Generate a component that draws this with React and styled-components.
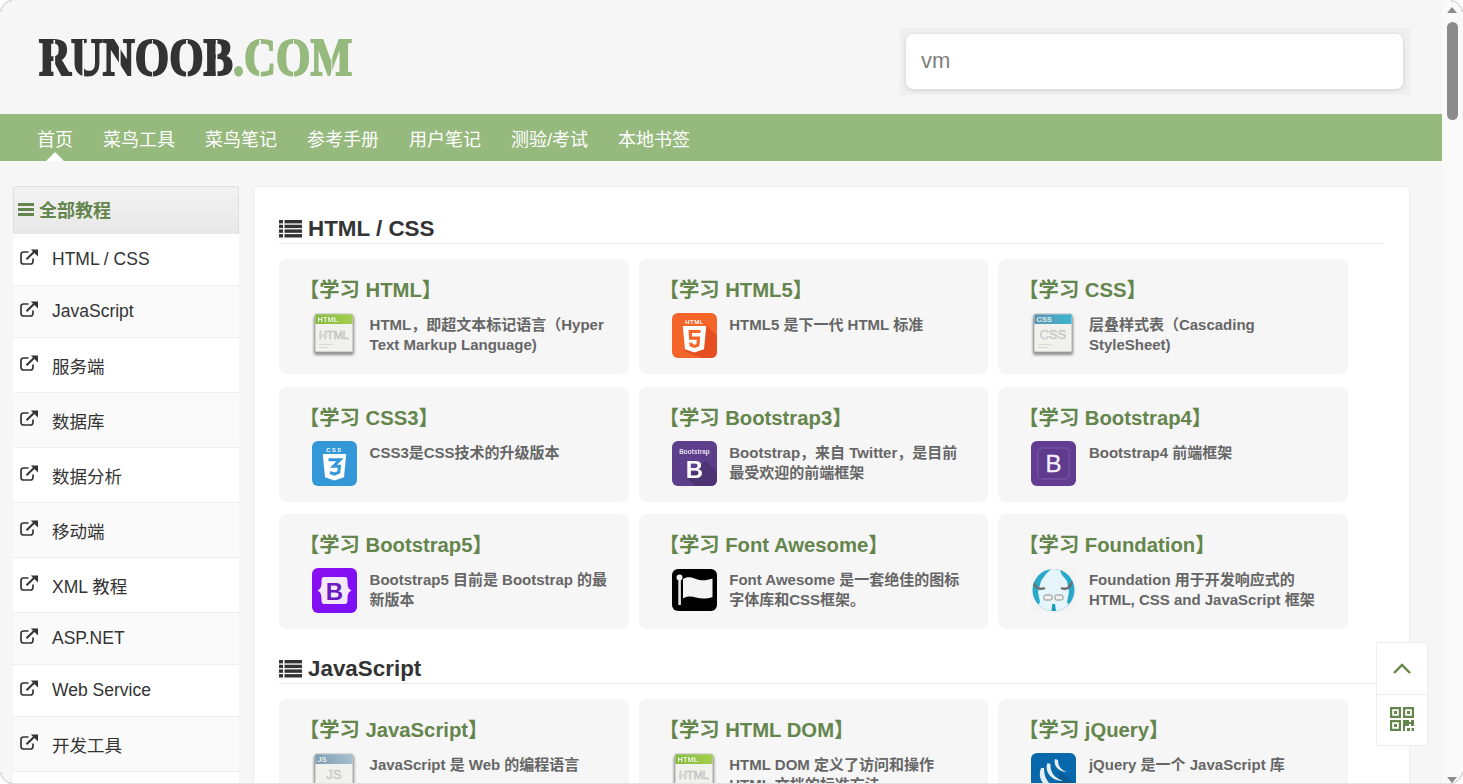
import React from "react";
import styled, { createGlobalStyle } from "styled-components";

const GREEN = "#96b97d";
const DARKGREEN = "#64854c";
const SANS = `"Liberation Sans", "Noto Sans CJK SC", sans-serif`;

const Global = createGlobalStyle`
  html, body { margin: 0; padding: 0; height: 100%; overflow: hidden; background: #f6f6f6; }
  * { box-sizing: border-box; }
  body { font-family: ${SANS}; }
`;

const Shell = styled.div`
  display: flex;
  width: 100%;
  height: 100vh;
  overflow: hidden;
  background: #f6f6f6;
`;
const Page = styled.div`
  flex: 1;
  min-width: 0;
  overflow: hidden;
`;
const Header = styled.header`
  height: 114px;
  display: flex;
  align-items: flex-start;
  justify-content: space-between;
  padding: 28px 32px 0 39px;
`;
const Logo = styled.div`
  margin-top: 6px;
  height: 48px;
  width: 314px;
  font-family: "Liberation Serif", serif;
  font-weight: 700;
  font-size: 52px;
  line-height: 48px;
  white-space: nowrap;
  transform: scaleX(0.85);
  transform-origin: left center;
  -webkit-text-stroke: 2px currentColor;
`;
const LogoPart = styled.span`
  color: ${(p) => p.$color};
`;
const LogoLetter = styled.span`
  position: relative;
  display: inline-block;
  &::after {
    content: "";
    position: absolute;
    left: ${(p) => p.$at}%;
    top: 6px;
    bottom: 5px;
    width: 1.6px;
    background: #f6f6f6;
  }
`;
const SearchWrap = styled.div`
  width: 510px;
  height: 67px;
  padding: 6px 7px 6px 6px;
  background: #efefef;
  border-radius: 2px;
`;
const SearchInput = styled.input`
  display: block;
  width: 100%;
  height: 55px;
  border: 0;
  outline: 0;
  border-radius: 7px;
  padding: 0 15px 2px;
  background: #fff;
  color: #808080;
  font: 22px ${SANS};
  box-shadow: 0 1px 4px rgba(0, 0, 0, 0.14);
`;
const Nav = styled.nav`
  height: 47px;
  background: ${GREEN};
  display: flex;
  align-items: flex-start;
  gap: 30px;
  padding-left: 37px;
`;
const NavItem = styled.a`
  position: relative;
  color: #fff;
  font-size: 18px;
  line-height: 53px;
  height: 47px;
  ${(p) =>
    p.$active &&
    `&::after {
      content: "";
      position: absolute;
      left: 50%;
      bottom: 0;
      margin-left: -9px;
      border-left: 9px solid transparent;
      border-right: 9px solid transparent;
      border-bottom: 9px solid #fff;
    }`}
`;
const Content = styled.div`
  display: flex;
  align-items: flex-start;
  gap: 14px;
  padding: 25px 32px 0 13px;
`;
const Sidebar = styled.aside`
  width: 226px;
  flex: none;
  background: #fff;
`;
const SideHead = styled.div`
  height: 48px;
  display: flex;
  align-items: center;
  gap: 5px;
  padding: 0 0 3px 4px;
  border: 1px solid #dedede;
  border-bottom: 0;
  border-radius: 3px 3px 0 0;
  background: linear-gradient(#f2f2f2, #e8e8e8);
  color: ${DARKGREEN};
  font-size: 18px;
  font-weight: 700;
`;
const SideRow = styled.a`
  display: flex;
  align-items: center;
  height: ${(p) => (p.$tall ? 55 : 52)}px;
  padding-left: 7px;
  border-bottom: 1px solid #eee;
  background: ${(p) => (p.$alt ? "#fafafa" : "#fff")};
  color: #333;
  font-size: 17.5px;
`;
const SideIcon = styled.svg`
  flex: none;
  width: 18px;
  height: 16px;
  margin-right: 14px;
  margin-top: -5px;
`;
const Main = styled.main`
  flex: 1;
  min-width: 0;
  background: #fff;
  border: 1px solid #eee;
  border-radius: 5px;
  padding: 28px 25px 0 25px;
`;
const Section = styled.section`
  margin-bottom: 26px;
`;
const SectionTitle = styled.h2`
  display: flex;
  align-items: center;
  gap: 6px;
  margin: 0 0 15px;
  height: 29px;
  padding-bottom: 1px;
  border-bottom: 1px solid #e8e8e8;
  color: #333;
  font-size: 22.4px;
  line-height: 28px;
  font-weight: 700;
`;
const CardGrid = styled.div`
  display: grid;
  grid-template-columns: repeat(3, 349.67px);
  column-gap: 10px;
  row-gap: 12.5px;
`;
const Card = styled.a`
  display: block;
  height: 115px;
  background: #f6f6f6;
  border-radius: 8px;
  padding: 18px 20px 0 20px;
`;
const CardTitle = styled.h4`
  margin: 0 0 10px;
  height: 26px;
  color: ${DARKGREEN};
  font-size: 20.3px;
  line-height: 26px;
  font-weight: 700;
  white-space: nowrap;
`;
const CardBody = styled.div`
  display: flex;
  gap: 12.6px;
  padding-left: 13px;
`;
const CardIcon = styled.svg`
  flex: none;
  width: 45px;
  height: 45px;
  ${(p) => p.$soft && "filter: blur(0.45px);"}
`;
const CardText = styled.p`
  margin: 2px 0 0;
  color: #666;
  font-size: 15px;
  line-height: 20px;
  font-weight: 700;
`;
const FloatBox = styled.div`
  position: fixed;
  left: 1376px;
  top: 642px;
  width: 52px;
  background: #fff;
  border: 1px solid #eee;
`;
const FloatCell = styled.div`
  height: 51px;
  display: flex;
  align-items: center;
  justify-content: center;
  & + & { border-top: 1px solid #eee; padding-bottom: 3px; }
`;
const ScrollTrack = styled.div`
  position: relative;
  flex: none;
  width: 21px;
  height: 100%;
  background: #f9f9f9;
`;
const ScrollThumb = styled.div`
  position: absolute;
  left: 5px;
  top: 22px;
  width: 11px;
  height: 98px;
  border-radius: 6px;
  background: #8b8b8b;
`;
const ScrollArrow = styled.div`
  position: absolute;
  left: 5px;
  ${(p) => (p.$down ? "bottom: 1px;" : "top: 7px;")}
  border-left: 5.5px solid transparent;
  border-right: 5.5px solid transparent;
  ${(p) => (p.$down ? "border-top: 6px solid #8b8b8b;" : "border-bottom: 6px solid #8b8b8b;")}
`;
const Corner = styled.div`
  position: fixed;
  width: 12px;
  height: 12px;
  overflow: hidden;
  ${(p) => p.$v}: 0;
  ${(p) => p.$h}: 0;
  &::before {
    content: "";
    position: absolute;
    width: 24px;
    height: 24px;
    ${(p) => p.$v}: 0;
    ${(p) => p.$h}: 0;
    border-radius: 50%;
    border: 1px solid #c4c4c4;
    box-shadow: 0 0 0 12px #fff;
  }
`;
const BottomEdge = styled.div`
  position: fixed;
  left: 0;
  right: 0;
  bottom: 0;
  height: 1px;
  background: #e4e4e4;
`;

const BarsIcon = () => (
  <svg width="16" height="13" viewBox="0 0 16 13" fill={DARKGREEN}>
    <rect y="0" width="16" height="3" />
    <rect y="5" width="16" height="3" />
    <rect y="10" width="16" height="3" />
  </svg>
);
const ListIcon = () => (
  <svg width="23" height="18" viewBox="0 0 23 18" fill="#333">
    {[0, 4.7, 9.4, 14.1].map((y) => (
      <g key={y}>
        <rect x="0" y={y} width="4" height="3.4" />
        <rect x="5.5" y={y} width="17.5" height="3.4" />
      </g>
    ))}
  </svg>
);
const ExtIcon = () => (
  <SideIcon viewBox="0 0 18 16">
    <path
      d="M8.5 3H3.4A2.4 2.4 0 0 0 1 5.4v7.2A2.4 2.4 0 0 0 3.4 15h7.2a2.4 2.4 0 0 0 2.4-2.4V9.5"
      fill="none"
      stroke="#333"
      strokeWidth="1.7"
    />
    <path d="M6.5 10.2L14 3" fill="none" stroke="#333" strokeWidth="2" />
    <path d="M10.8 0.4H18V7.6Z" fill="#333" />
  </SideIcon>
);

const WindowIcon = ({ bar, bar2, label, id }) => (
  <CardIcon viewBox="0 0 45 45" $soft>
    <defs>
      <filter id={`b${id}`} x="-20%" y="-20%" width="140%" height="140%">
        <feGaussianBlur stdDeviation="1.7" />
      </filter>
      <linearGradient id={`g${id}`} x1="0" y1="0" x2="1" y2="0">
        <stop offset="0" stopColor={bar} />
        <stop offset="1" stopColor={bar2} />
      </linearGradient>
    </defs>
    <rect x="2" y="3" width="40" height="39" rx="2" fill="#8a8a8a" filter={`url(#b${id})`} />
    <rect x="3" y="1" width="38" height="38" rx="1.5" fill="#f1f1ee" stroke="#a5a5a5" strokeWidth="0.8" />
    <rect x="3.4" y="1.4" width="37.2" height="9.6" fill={`url(#g${id})`} />
    <text x="5.5" y="8.6" fontFamily="Liberation Sans" fontSize="7.5" fontWeight="700" fill="#e8f0e0">{label}</text>
    <text x="22" y="26" textAnchor="middle" fontFamily="Liberation Sans" fontSize={label.length > 3 ? 11 : 13} fill="#f4f4f4" stroke="#b8b8b8" strokeWidth="0.6">{label}</text>
    <rect x="7" y="31" width="14" height="1" fill="#d8d8d8" />
    <rect x="7" y="34" width="9" height="1" fill="#d8d8d8" />
  </CardIcon>
);
const ShieldIcon = ({ bg, dark, text, id, digit }) => (
  <CardIcon viewBox="0 0 45 45" $soft>
    <defs>
      <clipPath id={`c${id}`}><rect width="45" height="45" rx="6" /></clipPath>
    </defs>
    <g clipPath={`url(#c${id})`}>
      <rect width="45" height="45" fill={bg} />
      {dark && <path d="M34 12L45 23V45H30L12 38Z" fill={dark} />}
      <text x="22.5" y="10.5" textAnchor="middle" fontFamily="Liberation Sans" fontSize="6" fontWeight="700" letterSpacing={digit === 3 ? 1.4 : 0.4} fill="#fff">{text}</text>
      <path d="M10.8 13H34.2L32 36.2L22.5 39.6L13 36.2Z" fill="#fff" />
      {digit === 5 ? (
        <path d="M16.5 17H28.5V20H19.8L20.1 23.5H28.2L27.4 33.3L22.5 35L17.6 33.3L17.3 29.5H20.4L20.6 31L22.5 31.7L24.4 31L24.7 26.7H17.1Z" fill={bg} />
      ) : (
        <path d="M16.5 18.7H28L21.5 25.2H27.4L26.8 31.3L22.5 33.2L18 31.5" fill="none" stroke={bg} strokeWidth="3" />
      )}
    </g>
  </CardIcon>
);
const Bs3Icon = () => (
  <CardIcon viewBox="0 0 45 45" $soft>
    <rect width="45" height="45" rx="6" fill="#5d3e8a" />
    <path d="M34 20L45 31V39A6 6 0 0 1 39 45H23L14 36Z" fill="#4d3374" />
    <text x="22.5" y="13" textAnchor="middle" fontFamily="Liberation Sans" fontSize="6.5" fontWeight="700" fill="#e6dff0">Bootstrap</text>
    <text x="22.5" y="37" textAnchor="middle" fontFamily="Liberation Sans" fontSize="24" fontWeight="700" fill="#fff">B</text>
  </CardIcon>
);
const Bs4Icon = () => (
  <CardIcon viewBox="0 0 45 45">
    <rect width="45" height="45" rx="6" fill="#623d92" />
    <rect x="7" y="7" width="31" height="31" rx="4" fill="#5f3b8e" stroke="#7350a2" strokeWidth="1.4" />
    <text x="22.5" y="31" textAnchor="middle" fontFamily="Liberation Sans" fontSize="24" fill="#f4effa" stroke="#f4effa" strokeWidth="0.3">B</text>
  </CardIcon>
);
const Bs5Icon = () => (
  <CardIcon viewBox="0 0 45 45">
    <defs>
      <linearGradient id="bs5" x1="0" y1="0" x2="1" y2="1">
        <stop offset="0" stopColor="#8c0ff0" />
        <stop offset="1" stopColor="#7a10f7" />
      </linearGradient>
    </defs>
    <rect width="45" height="45" rx="6" fill="url(#bs5)" />
    <path d="M12 9H33C35 9 35.5 11 35.5 13C35.5 18 36 21 39.5 22.5C36 24 35.5 27 35.5 32C35.5 34 35 36 33 36H12C10 36 9.5 34 9.5 32C9.5 27 9 24 5.5 22.5C9 21 9.5 18 9.5 13C9.5 11 10 9 12 9Z" fill="#f4e8fd" />
    <text x="22.5" y="31.5" textAnchor="middle" fontFamily="Liberation Sans" fontSize="24" fontWeight="700" fill="#6a1bc0">B</text>
  </CardIcon>
);
const FlagIcon = () => (
  <CardIcon viewBox="0 0 45 45" $soft>
    <rect y="1" width="45" height="42" rx="6" fill="#000" />
    <circle cx="7.5" cy="9.5" r="3" fill="#f2f2f2" />
    <rect x="6.3" y="11" width="2.6" height="26" fill="#e6e6e6" />
    <path d="M11 11C15 8.5 19 9 24 11C29 13 35 12.5 40.5 10.5V29C35 31 29 31 24 29.5C19 28 15 28 11 30.5Z" fill="#f4f4f4" />
  </CardIcon>
);
const YetiIcon = () => (
  <CardIcon viewBox="0 0 45 45" $soft>
    <defs>
      <clipPath id="yc"><circle cx="22.5" cy="22" r="21" /></clipPath>
      <radialGradient id="yetibg">
        <stop offset="0.72" stopColor="#d8d8d8" />
        <stop offset="1" stopColor="#f4f4f4" />
      </radialGradient>
    </defs>
    <rect width="45" height="45" rx="5" fill="url(#yetibg)" />
    <circle cx="22.5" cy="22" r="21" fill="#27a9c9" />
    <g clipPath="url(#yc)">
      <path d="M15 6L21 0H28L31 7L36 13L38 24L36 34L42 45H3L9 34L7 24L10 13Z" fill="#e6f5fb" />
      <path d="M2 14C4 20 9 22 14 20" fill="none" stroke="#6d6d6d" strokeWidth="2.4" />
      <path d="M41 14C39 20 35 22 30 20" fill="none" stroke="#6d6d6d" strokeWidth="2.4" />
      <rect x="13" y="27" width="8" height="5" rx="1.5" fill="#f2f2f2" stroke="#888" strokeWidth="1" />
      <rect x="24" y="27" width="8" height="5" rx="1.5" fill="#f2f2f2" stroke="#888" strokeWidth="1" />
      <path d="M21.3 36H24L25 43H20.5Z" fill="#1e9ac0" />
    </g>
  </CardIcon>
);
const JqIcon = () => (
  <CardIcon viewBox="0 0 45 45" $soft>
    <rect width="45" height="45" rx="6" fill="#0868ac" />
    <path d="M29 18L45 32V45H24Z" fill="#0a5a94" />
    <path d="M10 15C5 28 16 38 33 39C22 35 13 29 13 15Z" fill="#e4eff7" />
    <path d="M16.5 10C13 19 21 28 32 28C24 25 19 20 19.5 11Z" fill="#e4eff7" />
    <path d="M24 6C22 13 28 19 36 19C30 17 27 13 27 7Z" fill="#e4eff7" />
  </CardIcon>
);
const ChevronIcon = () => (
  <svg width="18" height="11" viewBox="0 0 18 11">
    <path d="M1 10L9 2L17 10" fill="none" stroke={DARKGREEN} strokeWidth="2.4" />
  </svg>
);
const QrIcon = () => (
  <svg width="24" height="24" viewBox="0 0 24 24" fill={DARKGREEN}>
    <path fillRule="evenodd" d="M0 0H11V11H0ZM2.2 2.2V8.8H8.8V2.2ZM13 0H24V11H13ZM15.2 2.2V8.8H21.8V2.2ZM0 13H11V24H0ZM2.2 15.2V21.8H8.8V15.2Z" />
    <rect x="4" y="4" width="3" height="3" />
    <rect x="17" y="4" width="3" height="3" />
    <rect x="4" y="17" width="3" height="3" />
    <path d="M13 13H19V15H21V13H24V19H21V17H19V19H15V24H13Z" />
    <rect x="17" y="21" width="3" height="3" />
    <rect x="21.5" y="21" width="2.5" height="3" />
  </svg>
);

const navItems = ["首页", "菜鸟工具", "菜鸟笔记", "参考手册", "用户笔记", "测验/考试", "本地书签"];
const sideItems = [
  ["HTML / CSS", false], ["JavaScript", false], ["服务端", true], ["数据库", true], ["数据分析", true],
  ["移动端", true], ["XML 教程", true], ["ASP.NET", false], ["Web Service", false], ["开发工具", true], ["网站建设", true],
];

const sections = [
  {
    title: "HTML / CSS",
    cards: [
      { t: "【学习 HTML】", d: "HTML，即超文本标记语言（Hyper Text Markup Language)", i: <WindowIcon id="h" bar="#86b93c" bar2="#a3cf4d" label="HTML" /> },
      { t: "【学习 HTML5】", d: "HTML5 是下一代 HTML 标准", i: <ShieldIcon id="h5" bg="#f56428" dark="#e54e20" text="HTML" digit={5} /> },
      { t: "【学习 CSS】", d: "层叠样式表（Cascading StyleSheet)", i: <WindowIcon id="c" bar="#5a93b5" bar2="#3eb6cf" label="CSS" /> },
      { t: "【学习 CSS3】", d: "CSS3是CSS技术的升级版本", i: <ShieldIcon id="c3" bg="#3498d8" text="CSS" digit={3} /> },
      { t: "【学习 Bootstrap3】", d: "Bootstrap，来自 Twitter，是目前最受欢迎的前端框架", i: <Bs3Icon /> },
      { t: "【学习 Bootstrap4】", d: "Bootstrap4 前端框架", i: <Bs4Icon /> },
      { t: "【学习 Bootstrap5】", d: "Bootstrap5 目前是 Bootstrap 的最新版本", i: <Bs5Icon /> },
      { t: "【学习 Font Awesome】", d: "Font Awesome 是一套绝佳的图标字体库和CSS框架。", i: <FlagIcon /> },
      { t: "【学习 Foundation】", d: "Foundation 用于开发响应式的 HTML, CSS and JavaScript 框架", i: <YetiIcon /> },
    ],
  },
  {
    title: "JavaScript",
    cards: [
      { t: "【学习 JavaScript】", d: "JavaScript 是 Web 的编程语言", i: <WindowIcon id="j" bar="#7d9db3" bar2="#a8c0cf" label="JS" /> },
      { t: "【学习 HTML DOM】", d: "HTML DOM 定义了访问和操作 HTML 文档的标准方法", i: <WindowIcon id="d" bar="#86b93c" bar2="#a3cf4d" label="HTML" /> },
      { t: "【学习 jQuery】", d: "jQuery 是一个 JavaScript 库", i: <JqIcon /> },
    ],
  },
];

const logoDark = [["R", 46], ["U", 36], ["N", 50], ["O", 49], ["O", 49], ["B", 42]];
const logoLight = [["C", 48], ["O", 49], ["M", 50]];

export default function App() {
  return (
    <Shell>
      <Global />
      <Page>
        <Header>
          <Logo>
            <LogoPart $color="#333">
              {logoDark.map(([c, at], i) => (
                <LogoLetter key={i} $at={at}>{c}</LogoLetter>
              ))}
            </LogoPart>
            <LogoPart $color={GREEN}>
              .
              {logoLight.map(([c, at], i) => (
                <LogoLetter key={i} $at={at}>{c}</LogoLetter>
              ))}
            </LogoPart>
          </Logo>
          <SearchWrap>
            <SearchInput readOnly value="vm" />
          </SearchWrap>
        </Header>
        <Nav>
          {navItems.map((n, i) => (
            <NavItem key={n} $active={i === 0}>{n}</NavItem>
          ))}
        </Nav>
        <Content>
          <Sidebar>
            <SideHead><BarsIcon />全部教程</SideHead>
            {sideItems.map(([s, tall], i) => (
              <SideRow key={s} $alt={i % 2 === 1} $tall={tall}><ExtIcon />{s}</SideRow>
            ))}
          </Sidebar>
          <Main>
            {sections.map((s) => (
              <Section key={s.title}>
                <SectionTitle><ListIcon />{s.title}</SectionTitle>
                <CardGrid>
                  {s.cards.map((c) => (
                    <Card key={c.t}>
                      <CardTitle>{c.t}</CardTitle>
                      <CardBody>
                        {c.i}
                        <CardText>{c.d}</CardText>
                      </CardBody>
                    </Card>
                  ))}
                </CardGrid>
              </Section>
            ))}
          </Main>
        </Content>
      </Page>
      <ScrollTrack>
        <ScrollArrow />
        <ScrollThumb />
        <ScrollArrow $down />
      </ScrollTrack>
      <FloatBox>
        <FloatCell><ChevronIcon /></FloatCell>
        <FloatCell><QrIcon /></FloatCell>
      </FloatBox>
      <BottomEdge />
      <Corner $v="top" $h="left" />
      <Corner $v="top" $h="right" />
      <Corner $v="bottom" $h="left" />
      <Corner $v="bottom" $h="right" />
    </Shell>
  );
}
